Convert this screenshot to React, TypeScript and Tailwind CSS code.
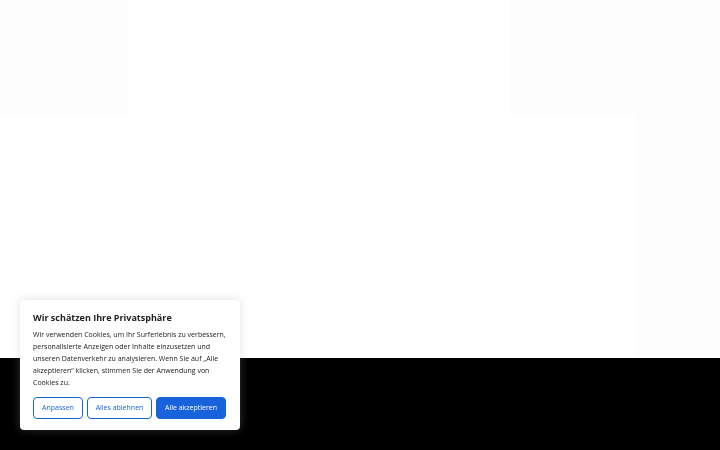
import React from 'react';

const ConsentBanner: React.FC = () => {
  return (
    <div className="fixed left-5 bottom-5 w-[220px] bg-white rounded shadow-[0_-1px_10px_0_rgba(172,171,171,0.3)] px-[13px] pt-3 pb-[11px] text-[#212121] font-['Open_Sans',sans-serif]">
      <p className="text-[9px] font-bold leading-[11px] mb-[6px]">Wir schätzen Ihre Privatsphäre</p>
      <p className="text-[7px] leading-[12px]">
        Wir verwenden Cookies, um Ihr Surferlebnis zu verbessern, personalisierte Anzeigen oder Inhalte einzusetzen und unseren Datenverkehr zu analysieren. Wenn Sie auf „Alle akzeptieren“ klicken, stimmen Sie der Anwendung von Cookies zu.
      </p>
      <div className="flex gap-1 mt-2">
        <button className="h-[22px] w-[50px] border border-[#1863dc] rounded-sm text-[7px] text-[#1863dc]">Anpassen</button>
        <button className="h-[22px] w-[65px] border border-[#1863dc] rounded-sm text-[7px] text-[#1863dc]">Alles ablehnen</button>
        <button className="h-[22px] w-[70px] border border-[#1863dc] bg-[#1863dc] rounded-sm text-[7px] text-white">Alle akzeptieren</button>
      </div>
    </div>
  );
};

export default function App() {
  return (
    <div className="w-[720px] h-[450px] flex flex-col bg-white overflow-hidden">
      <div className="h-[358px] flex">
        <div className="w-[128px] flex flex-col">
          <div className="h-[115px] bg-[#fdfdfd]" />
        </div>
        <div className="w-[382px]" />
        <div className="flex-1 flex flex-col">
          <div className="h-[115px] bg-[#fdfdfd]" />
          <div className="flex-1 flex">
            <div className="w-[126px]" />
            <div className="flex-1 bg-[#fdfdfd]" />
          </div>
        </div>
      </div>
      <div className="flex-1 bg-black" />
      <ConsentBanner />
    </div>
  );
}
